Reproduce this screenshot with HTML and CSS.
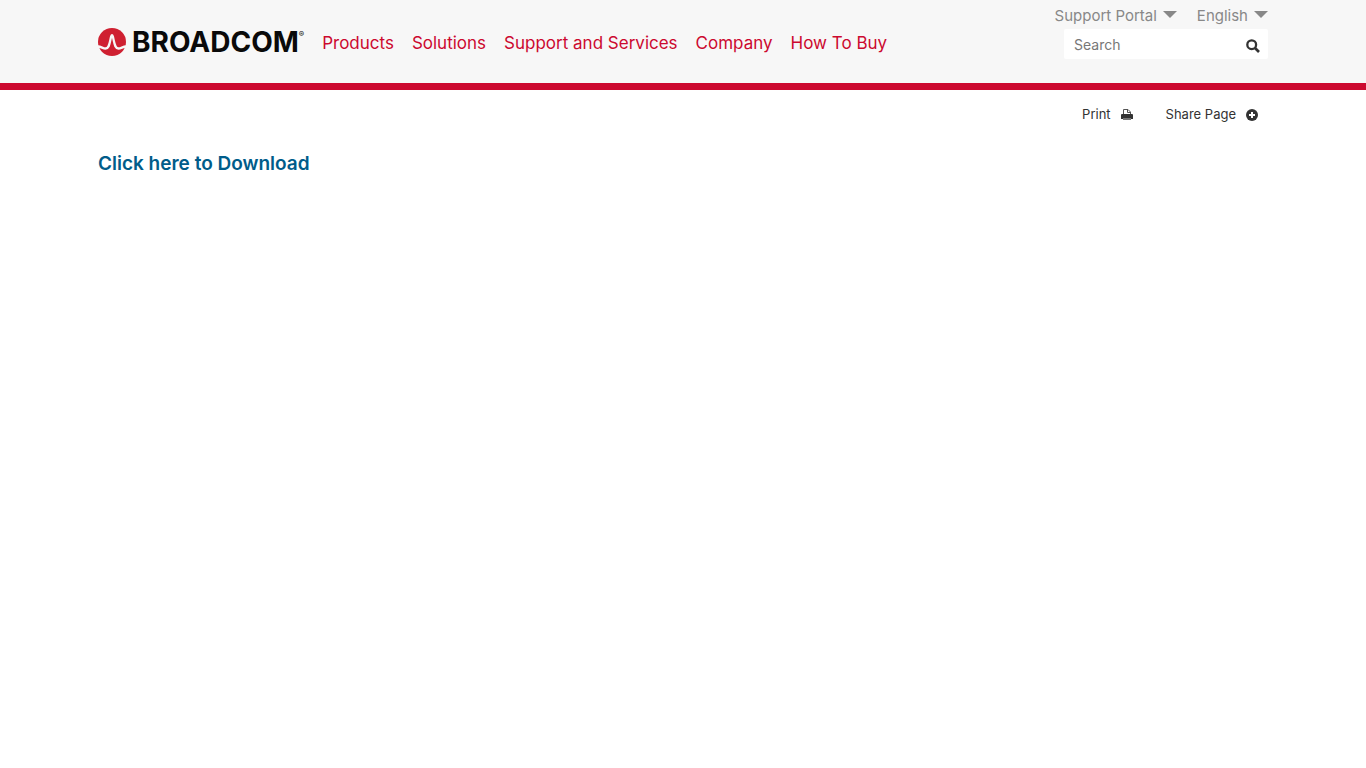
FILE: index.html
```html
<!DOCTYPE html>
<html lang="en">
<head>
  <meta charset="UTF-8" />
  <meta name="viewport" content="width=device-width, initial-scale=1.0"/>
  <title>Broadcom</title>
  <link rel="stylesheet" href="styles.css">
</head>
<body>

  <header class="header">
    <div class="container header-row">
      <a class="logo" href="#">
        <svg class="logo-mark" viewBox="0 0 28 28" aria-hidden="true">
          <circle cx="14" cy="14" r="14" fill="#cf2031"/>
          <path d="M0 18.500C3 18.500 5 20.500 7.500 20.500C11.400 20.500 11.500 15 13.200 8.300Q14 6 14.800 8.300C16.500 15 16.600 20.500 20.500 20.500C23 20.500 25 18.500 28 18.500" fill="none" stroke="#f7f7f7" stroke-width="2.300"/>
        </svg>
        <span class="logo-text">BROADCOM</span>
        <span class="logo-reg">®</span>
      </a>

      <nav class="main-nav">
        <a href="#">Products</a>
        <a href="#">Solutions</a>
        <a href="#">Support and Services</a>
        <a href="#">Company</a>
        <a href="#">How To Buy</a>
      </nav>

      <div class="tools">
        <div class="tool-menus">
          <button class="menu-btn" type="button">Support Portal
            <svg class="caret" viewBox="0 0 14 7" aria-hidden="true"><path d="M0 0h14L7 7z" fill="currentColor"/></svg>
          </button>
          <button class="menu-btn" type="button">English
            <svg class="caret" viewBox="0 0 14 7" aria-hidden="true"><path d="M0 0h14L7 7z" fill="currentColor"/></svg>
          </button>
        </div>
        <form class="search">
          <input class="search-input" type="text" placeholder="Search" aria-label="Search">
          <button class="search-btn" type="submit" aria-label="Submit search">
            <svg class="search-icon" viewBox="0 0 14 14" aria-hidden="true">
              <circle cx="5.700" cy="5.700" r="4.400" fill="none" stroke="currentColor" stroke-width="2.300"/>
              <path d="M9 9l4 4" stroke="currentColor" stroke-width="2.600"/>
            </svg>
          </button>
        </form>
      </div>
    </div>
  </header>

  <main class="container">
    <div class="page-actions">
      <button class="action-btn" type="button">Print
        <svg class="action-icon" viewBox="0 0 12 12" aria-hidden="true">
          <path d="M2.500 6V.5h4.500l2.500 2.500V6" fill="#fff" stroke="#555"/>
          <path d="M6.500.5V3.500h3" fill="none" stroke="#555"/>
          <path d="M1 5h10Q12 5 12 6V10H0V6Q0 5 1 5z" fill="currentColor"/>
          <path d="M2 9h8v2H2z" fill="#777"/>
        </svg>
      </button>
      <button class="action-btn" type="button">Share Page
        <svg class="action-icon" viewBox="0 0 12 12" aria-hidden="true">
          <circle cx="6" cy="6" r="6" fill="currentColor"/>
          <path d="M6 3v6M3 6h6" stroke="#fff" stroke-width="2"/>
        </svg>
      </button>
    </div>
    <h1 class="download"><a href="#">Click here to Download</a></h1>
  </main>

</body>
</html>
```
FILE: styles.css
```css
* {
  box-sizing: border-box;
}

body {
  margin: 0;
  font-family: Inter, "Open Sans", sans-serif;
  background: #fff;
  color: #333;
}

a {
  text-decoration: none;
}

button {
  font: inherit;
  border: none;
  background: none;
  padding: 0;
  cursor: pointer;
}

.container {
  width: 100%;
  max-width: 1170px;
  margin: 0 auto;
}

.header {
  background: #f7f7f7;
  border-bottom: 7px solid #cc092f;
}

.header-row {
  display: flex;
  padding-bottom: 24px;
}

.logo {
  display: flex;
  align-items: center;
  height: 28px;
  margin-top: 28px;
  margin-right: 18px;
  color: #0a0a0a;
}

.logo-mark {
  width: 28px;
  height: 28px;
  margin-right: 6px;
}

.logo-text {
  font-size: 28px;
  font-weight: 700;
  line-height: 28px;
}

.logo-reg {
  align-self: flex-start;
  font-size: 8px;
  line-height: 12px;
}

.main-nav {
  display: flex;
  gap: 18px;
  margin-top: 33px;
  font-size: 17px;
  line-height: 20px;
}

.main-nav a {
  color: #cc092f;
}

.tools {
  margin-left: auto;
  padding-top: 6px;
}

.tool-menus {
  display: flex;
  justify-content: flex-end;
  gap: 20px;
  margin-bottom: 3px;
}

.menu-btn {
  display: flex;
  gap: 6px;
  font-size: 15px;
  line-height: 20px;
  color: #888;
}

.caret {
  width: 14px;
  height: 7px;
  margin-top: 5px;
}

.search {
  display: flex;
  width: 204px;
  height: 30px;
  margin-left: auto;
  background: #fff;
  border-radius: 2px;
}

.search-input {
  flex: 1;
  min-width: 0;
  border: none;
  background: none;
  padding: 0 10px;
  font: inherit;
  font-size: 14px;
  color: #333;
}

.search-input::placeholder {
  color: #777;
}

.search-btn {
  display: flex;
  align-items: center;
  padding: 4px 8px 0;
  color: #333;
}

.search-icon {
  width: 14px;
  height: 14px;
}

.page-actions {
  display: flex;
  justify-content: flex-end;
  gap: 33px;
  padding: 16px 10px 0;
}

.action-btn {
  display: flex;
  align-items: center;
  gap: 10px;
  font-size: 13px;
  line-height: 16px;
  color: #333;
}

.action-icon {
  width: 12px;
  height: 12px;
  margin-top: 2px;
}

.download {
  margin: 30px 0;
  font-size: 19px;
  font-weight: 600;
  line-height: 24px;
}

.download a {
  color: #005c8a;
}
```
